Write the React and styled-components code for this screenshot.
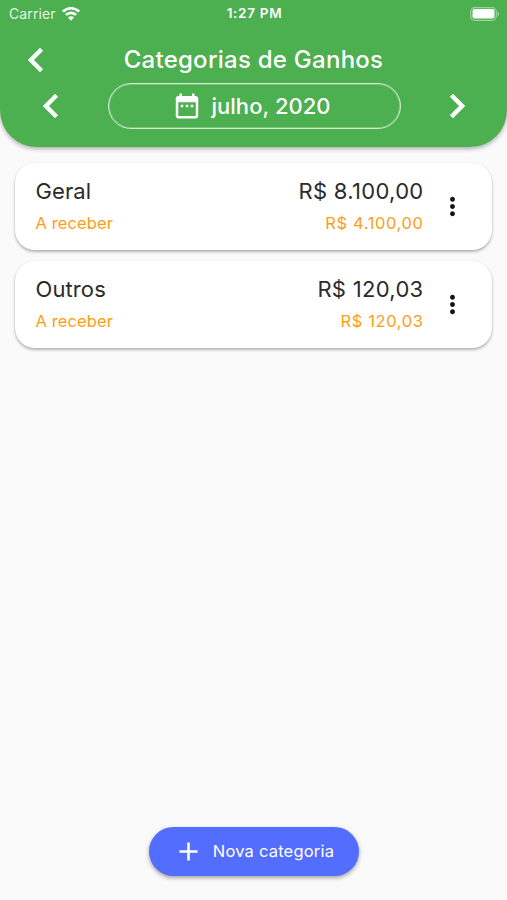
import React from "react";
import styled, { createGlobalStyle } from "styled-components";

const GlobalStyle = createGlobalStyle`
  *, *::before, *::after { box-sizing: border-box; }
  body {
    margin: 0;
    background: #fafafa;
    font-family: Inter, "Liberation Sans", sans-serif;
  }
  button {
    font: inherit;
    color: inherit;
    background: none;
    border: 0;
    padding: 0;
  }
`;

const Screen = styled.div`
  width: 507px;
  height: 900px;
  display: flex;
  flex-direction: column;
  align-items: center;
  overflow: hidden;
  background: #fafafa;
`;

const Header = styled.header`
  width: 100%;
  height: 147px;
  flex: none;
  background: #4caf50;
  color: #fff;
  border-radius: 0 0 37px 37px;
  box-shadow: 0 2px 4px rgba(0, 0, 0, 0.3);
`;

const StatusBar = styled.div`
  height: 27px;
  padding: 0 7px 0 9px;
  display: grid;
  grid-template-columns: 1fr auto 1fr;
  align-items: center;
`;

const Carrier = styled.div`
  display: flex;
  align-items: center;
  gap: 6px;
  font-size: 14px;
  line-height: 27px;
  letter-spacing: 0.1px;
  color: rgba(255, 255, 255, 0.88);
`;

const Clock = styled.div`
  font-size: 13.5px;
  font-weight: 600;
  line-height: 27px;
  letter-spacing: 0.7px;
`;

const BatteryIcon = styled.svg`
  justify-self: end;
`;

const TitleRow = styled.div`
  height: 56px;
  margin-top: 5px;
  padding: 0 12px;
  display: grid;
  grid-template-columns: 48px 1fr 48px;
  align-items: center;
`;

const Title = styled.h1`
  margin: 0;
  font-size: 24px;
  line-height: 30px;
  font-weight: 500;
  letter-spacing: 0.26px;
  text-align: center;
  white-space: nowrap;
`;

const MonthRow = styled.div`
  height: 48px;
  margin-top: -6px;
  padding: 0 26px 0 27px;
  display: flex;
  align-items: center;
  justify-content: space-between;
`;

const IconButton = styled.button`
  width: 48px;
  height: 48px;
  display: flex;
  align-items: center;
  justify-content: center;

  path {
    stroke: currentColor;
    stroke-width: 0.25;
  }
`;

const MonthPicker = styled.button`
  width: 293px;
  height: 46px;
  padding-right: 5px;
  display: flex;
  align-items: center;
  justify-content: center;
  gap: 9px;
  border: 1px solid rgba(255, 255, 255, 0.75);
  border-radius: 23px;
  box-shadow: inset 0 0 0 1px rgba(255, 255, 255, 0.25);
  font-size: 22px;
  font-weight: 500;
  letter-spacing: 0.05px;
`;

const CategoryList = styled.main`
  width: 477px;
  margin-top: 16px;
  flex: 1;
  display: flex;
  flex-direction: column;
  gap: 11px;
`;

const Card = styled.article`
  height: 87px;
  padding: 0 25px 0 20.5px;
  display: flex;
  align-items: center;
  background: #fff;
  border-radius: 20px;
  box-shadow: 0 2px 3px rgba(0, 0, 0, 0.28), 0 0 2px rgba(0, 0, 0, 0.08);
`;

const CardBody = styled.div`
  width: 388px;
  padding-bottom: 4px;
  display: flex;
  flex-direction: column;
  gap: 5px;
`;

const Line = styled.div`
  display: flex;
  justify-content: space-between;
  white-space: nowrap;
  font-size: ${(p) => (p.$pending ? 16.5 : 22)}px;
  line-height: ${(p) => (p.$pending ? 22 : 32)}px;
  color: ${(p) => (p.$pending ? "#ff9d14" : "#2b2b2b")};
`;

const Label = styled.span`
  letter-spacing: 0.1px;
`;

const Amount = styled.span`
  margin-right: -0.5px;
  letter-spacing: ${(p) => (p.$pending ? 0.6 : 0.3)}px;
`;

const MenuButton = styled.button`
  width: 29px;
  height: 29px;
  margin-left: 15px;
  color: #111;
`;

const NewButton = styled.button`
  flex: none;
  width: 210px;
  height: 49px;
  margin-bottom: 24px;
  display: flex;
  align-items: center;
  justify-content: center;
  gap: 9px;
  border-radius: 25px;
  background: #536dfe;
  color: #fff;
  font-size: 16.5px;
  letter-spacing: 0.2px;
  box-shadow: 0 2px 4px rgba(0, 0, 0, 0.35);
`;

const ButtonText = styled.span`
  padding-bottom: 2px;
`;

function Icon({ d, size }) {
  return (
    <svg width={size} height={size} viewBox="0 0 24 24" fill="currentColor" display="block" aria-hidden="true">
      <path d={d} />
    </svg>
  );
}

const ICONS = {
  before: "M15.41 7.41 14 6l-6 6 6 6 1.41-1.41L10.83 12z",
  next: "M10 6 8.59 7.41 13.17 12l-4.58 4.59L10 18l6-6z",
  calendar:
    "M9 11H7v2h2v-2zm4 0h-2v2h2v-2zm4 0h-2v2h2v-2zm2-7h-1V2h-2v2H8V2H6v2H5c-1.11 0-1.99.9-1.99 2L3 20c0 1.1.89 2 2 2h14c1.1 0 2-.9 2-2V6c0-1.1-.9-2-2-2zm0 16H5V9h14v11z",
  more: "M12 8c1.1 0 2-.9 2-2s-.9-2-2-2-2 .9-2 2 .9 2 2 2zm0 2c-1.1 0-2 .9-2 2s.9 2 2 2 2-.9 2-2-.9-2-2-2zm0 6c-1.1 0-2 .9-2 2s.9 2 2 2 2-.9 2-2-.9-2-2-2z",
  add: "M19 13h-6v6h-2v-6H5v-2h6V5h2v6h6v2z",
};

function WifiIcon() {
  return (
    <svg width="18" height="14" viewBox="0 0 18 14" fill="none" stroke="#fff" strokeWidth="2.7" aria-hidden="true">
      <path d="M0.9 4.6a11.5 11.5 0 0 1 16.2 0" />
      <path d="M3.9 7.9a7.2 7.2 0 0 1 10.2 0" />
      <path d="M9 13.8 6 10.6a4.3 4.3 0 0 1 6 0z" fill="#fff" stroke="none" />
    </svg>
  );
}

function Battery() {
  return (
    <BatteryIcon width="30" height="14" viewBox="0 0 30 14" aria-hidden="true">
      <rect x="0.7" y="0.7" width="25.6" height="12.6" rx="4" fill="none" stroke="#fff" strokeOpacity="0.45" strokeWidth="1.2" />
      <rect x="2.5" y="2" width="22" height="9.6" rx="2" fill="#fff" />
      <path d="M27.6 4.6c2 1 2 3.8 0 4.8z" fill="#fff" fillOpacity="0.5" />
    </BatteryIcon>
  );
}

const categories = [
  { name: "Geral", total: "R$ 8.100,00", pending: "R$ 4.100,00" },
  { name: "Outros", total: "R$ 120,03", pending: "R$ 120,03" },
];

export default function App() {
  return (
    <>
      <GlobalStyle />
      <Screen>
        <Header>
          <StatusBar>
            <Carrier>
              Carrier
              <WifiIcon />
            </Carrier>
            <Clock>1:27 PM</Clock>
            <Battery />
          </StatusBar>
          <TitleRow>
            <IconButton aria-label="Voltar">
              <Icon d={ICONS.before} size={48} />
            </IconButton>
            <Title>Categorias de Ganhos</Title>
          </TitleRow>
          <MonthRow>
            <IconButton aria-label="Mês anterior">
              <Icon d={ICONS.before} size={48} />
            </IconButton>
            <MonthPicker>
              <Icon d={ICONS.calendar} size={30} />
              julho, 2020
            </MonthPicker>
            <IconButton aria-label="Próximo mês">
              <Icon d={ICONS.next} size={48} />
            </IconButton>
          </MonthRow>
        </Header>
        <CategoryList>
          {categories.map((c) => (
            <Card key={c.name}>
              <CardBody>
                <Line>
                  <Label>{c.name}</Label>
                  <Amount>{c.total}</Amount>
                </Line>
                <Line $pending>
                  <Label>A receber</Label>
                  <Amount $pending>{c.pending}</Amount>
                </Line>
              </CardBody>
              <MenuButton aria-label="Opções">
                <Icon d={ICONS.more} size={29} />
              </MenuButton>
            </Card>
          ))}
        </CategoryList>
        <NewButton>
          <Icon d={ICONS.add} size={31} />
          <ButtonText>Nova categoria</ButtonText>
        </NewButton>
      </Screen>
    </>
  );
}
